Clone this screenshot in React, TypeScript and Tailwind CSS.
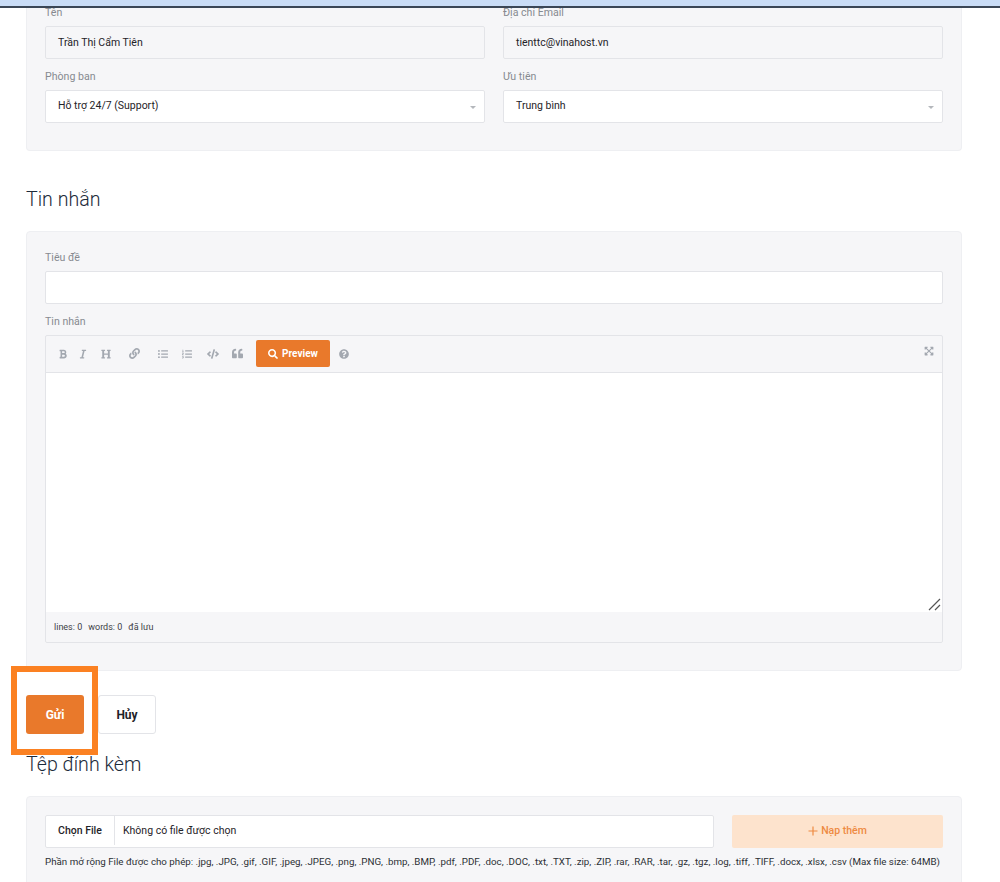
import type { ReactNode } from "react"
import {
  FaBold,
  FaCode,
  FaExpandArrowsAlt,
  FaHeading,
  FaItalic,
  FaLink,
  FaListOl,
  FaListUl,
  FaQuestionCircle,
  FaQuoteLeft,
  FaSearch,
} from "react-icons/fa"

const fileTypes =
  "Phần mở rộng File được cho phép: .jpg, .JPG, .gif, .GIF, .jpeg, .JPEG, .png, .PNG, .bmp, .BMP, .pdf, .PDF, .doc, .DOC, .txt, .TXT, .zip, .ZIP, .rar, .RAR, .tar, .gz, .tgz, .log, .tiff, .TIFF, .docx, .xlsx, .csv (Max file size: 64MB)"

function Label({ children, className = "" }: { children: ReactNode; className?: string }) {
  return <div className={`mb-1 h-5 text-[10.6px] leading-[22px] text-[#868a90] ${className}`}>{children}</div>
}

function Field({ children, readOnly, select }: { children?: ReactNode; readOnly?: boolean; select?: boolean }) {
  return (
    <div
      className={`relative flex h-[33px] items-center rounded-[2px] border border-[#e3e4e8] px-[12px] text-[10.5px] text-[#1f2328] ${
        readOnly ? "bg-[#f6f6f8]" : "bg-white"
      } ${select ? "pb-[2px]" : ""}`}
    >
      {children}
      {select && <span className="ml-auto mr-[-4px] mt-[3px] size-0 border-x-[3px] border-t-[3px] border-x-transparent border-t-[#b4b7bc]" />}
    </div>
  )
}

function Heading({ children, className = "" }: { children: ReactNode; className?: string }) {
  return <h2 className={`mb-[17px] h-[30px] text-[19.6px] font-light leading-[32px] text-[#1d2b3a] ${className}`}>{children}</h2>
}

function Panel({ children, className = "" }: { children: ReactNode; className?: string }) {
  return <section className={`overflow-hidden rounded-[4px] border border-[#eeeff2] bg-[#f6f6f8] px-[18px] ${className}`}>{children}</section>
}

const toolIcon = "text-[#a3a8b0]"

export default function App() {
  return (
    <div className="relative h-[882px] w-[1000px] overflow-hidden bg-white font-['Roboto',sans-serif]">
      <div className="relative z-10 h-2 border-b-2 border-[#3a4656] bg-[#c9dcf6]" />

      <main className="w-[962px] pl-[26px]">
        <Panel className="rounded-t-none border-t-0 pb-[27px]">
          <div className="grid grid-cols-2 gap-x-[18px] gap-y-[7px]">
            <div className="-mt-[6px]">
              <Label>Tên</Label>
              <Field readOnly>Trần Thị Cẩm Tiên</Field>
            </div>
            <div className="-mt-[6px]">
              <Label>Địa chỉ Email</Label>
              <Field readOnly>tienttc@vinahost.vn</Field>
            </div>
            <div>
              <Label>Phòng ban</Label>
              <Field select>Hỗ trợ 24/7 (Support)</Field>
            </div>
            <div>
              <Label>Ưu tiên</Label>
              <Field select>Trung bình</Field>
            </div>
          </div>
        </Panel>

        <Heading className="mt-[33px]">Tin nhắn</Heading>
        <Panel className="pb-[27px] pt-[15px]">
          <Label>Tiêu đề</Label>
          <Field />
          <Label className="mt-[7px]">Tin nhắn</Label>
          <div className="rounded-[2px] border border-[#e3e4e8]">
            <div className="flex h-[37px] items-center border-b border-[#e3e4e8] pb-[1px] pl-[12px] pr-[8px]">
              <FaBold className={`${toolIcon} h-[10px] w-auto`} />
              <FaItalic className={`${toolIcon} ml-[10px] h-[10px] w-auto`} />
              <FaHeading className={`${toolIcon} ml-[13px] h-[10px] w-auto`} />
              <FaLink className={`${toolIcon} ml-[18px] size-[11px]`} />
              <FaListUl className={`${toolIcon} ml-[18px] size-[10px]`} />
              <FaListOl className={`${toolIcon} ml-[14px] size-[10px]`} />
              <FaCode className={`${toolIcon} ml-[15px] size-[12px]`} />
              <FaQuoteLeft className={`${toolIcon} ml-[13px] size-[11px]`} />
              <button className="ml-[13px] flex h-[27px] w-[74px] items-center justify-center gap-[4px] rounded-[2px] bg-[#e9792b] text-[10px] font-bold text-white">
                <FaSearch className="size-[10px]" />
                Preview
              </button>
              <FaQuestionCircle className={`${toolIcon} ml-[9px] size-[10px]`} />
              <FaExpandArrowsAlt className={`${toolIcon} -mt-[6px] ml-auto size-[10px]`} />
            </div>
            <div className="relative h-[239px] bg-white">
              <svg className="absolute bottom-[1px] right-[1px] size-[13px]" viewBox="0 0 13 13" fill="none" stroke="#555" strokeWidth="1.2">
                <path d="M1 12 12 1M7 12l5-5" />
              </svg>
            </div>
            <div className="flex h-[30px] items-center gap-[6px] pl-[8px] pt-[2px] text-[9px] text-[#3d4147]">
              <span>lines: 0</span>
              <span>words: 0</span>
              <span>đã lưu</span>
            </div>
          </div>
        </Panel>

        <div className="mt-[24px] flex gap-[14px]">
          <button className="h-[39px] w-[58px] rounded-[3px] bg-[#e9792b] text-xs font-bold text-white">Gửi</button>
          <button className="h-[39px] w-[58px] rounded-[3px] border border-[#e3e4e8] bg-white text-xs font-bold text-[#1f2328]">Hủy</button>
        </div>

        <Heading className="mt-[15px]">Tệp đính kèm</Heading>
        <Panel className="h-[120px] pt-[18px]">
          <div className="flex gap-[18px]">
            <div className="flex h-[33px] w-[669px] items-center rounded-[2px] border border-[#e3e4e8] bg-white pb-[2px] text-[10.5px] text-[#1f2328]">
              <span className="flex h-full w-[69px] items-center justify-center border-r border-[#e3e4e8] font-medium">Chọn File</span>
              <span className="pl-[8px]">Không có file được chọn</span>
            </div>
            <button className="flex h-[33px] w-[211px] items-center justify-center gap-[3px] rounded-[2px] bg-[#fde3cd] pb-[2px] text-[10.5px] font-medium text-[#ee8a42]">
              <svg className="size-[10px]" viewBox="0 0 10 10" stroke="currentColor" strokeWidth="1.2">
                <path d="M5 .5v9M.5 5h9" />
              </svg>
              Nạp thêm
            </button>
          </div>
          <p className="mt-[7px] whitespace-nowrap text-[9.75px] leading-[14px] text-[#2b2f34]">{fileTypes}</p>
        </Panel>
      </main>

      <div className="pointer-events-none absolute left-[11px] top-[666px] h-[89px] w-[87px] border-[6px] border-[#fb8122]" />
    </div>
  )
}
